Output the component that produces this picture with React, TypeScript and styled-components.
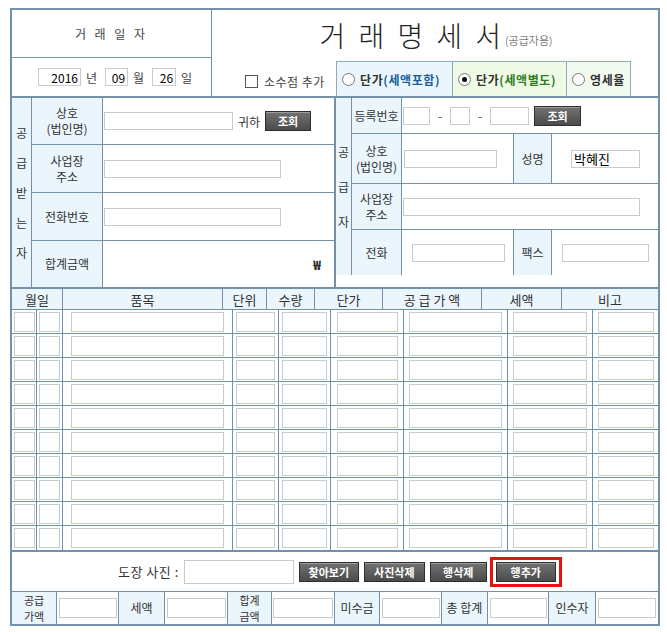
import React from 'react';
import styled, { createGlobalStyle } from 'styled-components';

const line = '#7391aa';
const pale = '#eaf5fc';
const font = '"Noto Sans CJK KR", "Noto Sans", sans-serif';

const GlobalStyle = createGlobalStyle`
  html, body { margin: 0; padding: 0; background: #fff; }
  body { font-family: ${font}; font-size: 12px; color: #333; }
  * { box-sizing: border-box; }
`;

const Page = styled.div`
  padding: 8px 0 0 10px;
`;

const Sheet = styled.div`
  width: 650px;
  border: 2px solid ${line};
`;

const Field = styled.input<{ $w: number; $h?: number; $align?: string }>`
  width: ${p => p.$w}px;
  height: ${p => p.$h ?? 20}px;
  border: 1px solid #cbcbcb;
  background: #fff;
  padding: 0 2px;
  margin: 0;
  font-family: ${font};
  font-size: 12px;
  line-height: 1;
  text-align: ${p => p.$align ?? 'left'};
  color: #000;
  outline: none;
`;

const DarkButton = styled.button<{ $w: number }>`
  width: ${p => p.$w}px;
  height: 20px;
  padding: 0;
  border: 1px solid #2e2e2e;
  background: linear-gradient(#727272, #4b4b4b);
  box-shadow: inset 0 1px 0 rgba(255, 255, 255, 0.3);
  color: #fff;
  font-family: ${font};
  font-size: 11px;
  font-weight: 700;
  line-height: 18px;
  cursor: pointer;
`;

/* ---------- head ---------- */

const Head = styled.div`
  display: flex;
  height: 88px;
  border-bottom: 2px solid ${line};
`;

const DateBlock = styled.div`
  width: 200px;
  border-right: 1px solid ${line};
  display: flex;
  flex-direction: column;
`;

const DateTitle = styled.div`
  height: 48px;
  border-bottom: 1px solid ${line};
  display: flex;
  align-items: center;
  justify-content: center;
  letter-spacing: 3px;
  color: #444;
`;

const DateRow = styled.div`
  flex: 1;
  display: flex;
  align-items: center;
  padding-left: 26px;
  gap: 5px;
  color: #444;
`;

const Unit = styled.span`
  margin-right: 3px;
`;

const TitleBlock = styled.div`
  flex: 1;
  display: flex;
  flex-direction: column;
`;

const Title = styled.div`
  height: 50px;
  display: flex;
  align-items: center;
  justify-content: center;
  padding-left: 2px;
  font-size: 28px;
  font-weight: 300;
  letter-spacing: 2px;
  word-spacing: 3px;
  color: #222;
`;

const Sub = styled.span`
  font-size: 11px;
  letter-spacing: 0;
  word-spacing: 0;
  margin: 10px 0 0 2px;
  color: #444;
`;

const OptionRow = styled.div`
  flex: 1;
  display: flex;
  align-items: stretch;
`;

const CheckLabel = styled.label`
  display: flex;
  align-items: center;
  gap: 6px;
  padding: 6px 0 0 33px;
  width: 124px;
  color: #444;
  letter-spacing: 0.5px;
  white-space: nowrap;
`;

const Box = styled.span`
  width: 13px;
  height: 13px;
  border: 1px solid #555;
  background: #fff;
`;

const RadioGroup = styled.div`
  display: flex;
  margin-top: 1px;
`;

const RadioCell = styled.label<{ $bg: string; $w: number }>`
  width: ${p => p.$w}px;
  background: ${p => p.$bg};
  border: 1px solid #8eaabf;
  border-bottom: none;
  margin-left: -1px;
  display: flex;
  align-items: center;
  gap: 5px;
  padding-left: 5px;
  font-weight: 700;
  color: #333;
  letter-spacing: 0.6px;
  white-space: nowrap;
  &:first-child { margin-left: 0; }
`;

const Dot = styled.span<{ $on?: boolean }>`
  width: 13px;
  height: 13px;
  border-radius: 50%;
  border: 1px solid #777;
  background: #fff;
  display: flex;
  align-items: center;
  justify-content: center;
  flex: none;
  &::after {
    content: '';
    width: 5px;
    height: 5px;
    border-radius: 50%;
    background: ${p => (p.$on ? '#111' : 'transparent')};
  }
`;

const Tint = styled.span<{ $c: string }>`
  color: ${p => p.$c};
`;

/* ---------- parties ---------- */

const Parties = styled.div`
  display: flex;
  height: 191px;
  border-bottom: 2px solid ${line};
`;

const Receiver = styled.div`
  width: 324px;
  display: grid;
  grid-template-columns: 20px 71px 1fr;
  grid-template-rows: 47px 48px 48px 1fr;
  border-right: 2px solid ${line};
`;

const Supplier = styled.div`
  flex: 1;
  display: grid;
  grid-template-columns: 16px 50px 112px 38px 1fr;
  grid-template-rows: 36px 50px 46px 45px 1fr;
`;

const Side = styled.div<{ $lh: number; $rows: string }>`
  grid-row: ${p => p.$rows};
  grid-column: 1;
  background: ${pale};
  border-right: 1px solid ${line};
  display: flex;
  flex-direction: column;
  align-items: center;
  justify-content: center;
  line-height: ${p => p.$lh}px;
  color: #333;
`;

const Label = styled.div<{ $last?: boolean }>`
  background: ${pale};
  border-right: 1px solid ${line};
  border-bottom: ${p => (p.$last ? 'none' : `1px solid ${line}`)};
  display: flex;
  align-items: center;
  justify-content: center;
  text-align: center;
  line-height: 16px;
  color: #333;
  white-space: nowrap;
`;

const Cell = styled.div<{ $last?: boolean; $span?: string; $pad?: number; $right?: boolean }>`
  grid-column: ${p => p.$span ?? 'auto'};
  border-bottom: ${p => (p.$last ? 'none' : `1px solid ${line}`)};
  border-right: ${p => (p.$right ? `1px solid ${line}` : 'none')};
  display: flex;
  align-items: center;
  gap: 5px;
  padding-left: ${p => p.$pad ?? 1}px;
  color: #333;
`;

const Won = styled.span`
  margin-left: auto;
  margin-right: 13px;
  font-weight: 700;
  font-size: 13px;
  color: #222;
`;

const Dash = styled.span`
  width: 10px;
  text-align: center;
  color: #444;
`;

const Filler = styled.div`
  grid-column: 1 / -1;
`;

/* ---------- items ---------- */

const headCols = [51, 160, 44, 48, 68, 99, 80, 96];
const bodyCols = [25, 26, 170, 46, 52, 73, 104, 85, 65];
const bodyInputs = [21, 21, 153, 39, 45, 61, 93, 74, 56];
const headNames = ['월일', '품목', '단위', '수량', '단가', '공 급 가 액', '세액', '비고'];

const ItemHead = styled.div`
  display: grid;
  grid-template-columns: ${headCols.map(c => `${c}px`).join(' ')};
  height: 21px;
  background: ${pale};
  border-bottom: 1px solid ${line};
`;

const HeadCell = styled.div`
  border-right: 1px solid ${line};
  display: flex;
  align-items: center;
  justify-content: center;
  font-size: 13px;
  color: #333;
  &:last-child { border-right: none; }
`;

const ItemBody = styled.div`
  border-bottom: 2px solid ${line};
`;

const ItemRow = styled.div`
  display: grid;
  grid-template-columns: ${bodyCols.map(c => `${c}px`).join(' ')};
  height: 24px;
  border-bottom: 1px solid ${line};
  &:last-child { border-bottom: none; }
`;

const RowCell = styled.div`
  border-right: 1px solid ${line};
  display: flex;
  align-items: center;
  justify-content: center;
  &:last-child { border-right: none; }
`;

/* ---------- footer ---------- */

const StampRow = styled.div`
  height: 40px;
  border-bottom: 1px solid ${line};
  display: flex;
  align-items: center;
  padding-left: 106px;
  gap: 5px;
  color: #333;
  font-size: 13px;
`;

const StampText = styled.span`
  letter-spacing: 0.5px;
`;

const Highlight = styled.div`
  border: 3px solid #e8120c;
  padding: 2px 3px;
  margin-left: -2px;
  display: flex;
`;

const TotalRow = styled.div`
  display: grid;
  grid-template-columns: 45px 62px 46px 63px 44px 63px 45px 62px 46px 61px 47px 62px;
  height: 32px;
`;

const TotalLabel = styled.div<{ $two?: boolean }>`
  background: ${pale};
  border-right: 1px solid ${line};
  display: flex;
  align-items: center;
  justify-content: center;
  text-align: center;
  line-height: ${p => (p.$two ? '16px' : '18px')};
  font-size: ${p => (p.$two ? '11px' : '12px')};
  color: #333;
  white-space: nowrap;
`;

const TotalCell = styled.div`
  border-right: 1px solid ${line};
  display: flex;
  align-items: center;
  justify-content: center;
  &:last-child { border-right: none; }
`;

const totals: [string[], number][] = [
  [['공급', '가액'], 58],
  [['세액'], 59],
  [['합계', '금액'], 60],
  [['미수금'], 58],
  [['총 합계'], 57],
  [['인수자'], 58]
];

const App: React.FC = () => {
  return (
    <>
      <GlobalStyle />
      <Page>
        <Sheet>
          <Head>
            <DateBlock>
              <DateTitle>거 래 일 자</DateTitle>
              <DateRow>
                <Field $w={43} $h={18} $align='right' defaultValue='2016' readOnly />
                <Unit>년</Unit>
                <Field $w={23} $h={18} $align='right' defaultValue='09' readOnly />
                <Unit>월</Unit>
                <Field $w={24} $h={18} $align='right' defaultValue='26' readOnly />
                <Unit>일</Unit>
              </DateRow>
            </DateBlock>
            <TitleBlock>
              <Title>
                거 래 명 세 서<Sub>(공급자용)</Sub>
              </Title>
              <OptionRow>
                <CheckLabel>
                  <Box />
                  소수점 추가
                </CheckLabel>
                <RadioGroup>
                  <RadioCell $bg={pale} $w={117}>
                    <Dot />
                    <span>단가<Tint $c='#1b5e9c'>(세액포함)</Tint></span>
                  </RadioCell>
                  <RadioCell $bg='#effae6' $w={115}>
                    <Dot $on />
                    <span>단가<Tint $c='#2f7d1e'>(세액별도)</Tint></span>
                  </RadioCell>
                  <RadioCell $bg='#f2f9ee' $w={65}>
                    <Dot />
                    <span>영세율</span>
                  </RadioCell>
                </RadioGroup>
              </OptionRow>
            </TitleBlock>
          </Head>

          <Parties>
            <Receiver>
              <Side $lh={30} $rows='1 / -1'>
                <span>공</span>
                <span>급</span>
                <span>받</span>
                <span>는</span>
                <span>자</span>
              </Side>
              <Label>상호<br />(법인명)</Label>
              <Cell>
                <Field $w={129} $h={18} />
                <span>귀하</span>
                <DarkButton $w={46}>조회</DarkButton>
              </Cell>
              <Label>사업장<br />주소</Label>
              <Cell>
                <Field $w={177} $h={18} />
              </Cell>
              <Label>전화번호</Label>
              <Cell>
                <Field $w={177} $h={18} />
              </Cell>
              <Label $last>합계금액</Label>
              <Cell $last>
                <Won>₩</Won>
              </Cell>
            </Receiver>

            <Supplier>
              <Side $lh={35} $rows='1 / 5'>
                <span>공</span>
                <span>급</span>
                <span>자</span>
              </Side>
              <Label>등록번호</Label>
              <Cell $span='3 / 6' $pad={1}>
                <Field $w={27} $h={18} />
                <Dash>-</Dash>
                <Field $w={20} $h={18} />
                <Dash>-</Dash>
                <Field $w={39} $h={18} />
                <DarkButton $w={47}>조회</DarkButton>
              </Cell>
              <Label>상호<br />(법인명)</Label>
              <Cell $right $pad={2}>
                <Field $w={93} $h={18} />
              </Cell>
              <Label>성명</Label>
              <Cell $pad={19}>
                <Field $w={69} $h={18} defaultValue='박혜진' readOnly style={{ fontSize: 13 }} />
              </Cell>
              <Label>사업장<br />주소</Label>
              <Cell $span='3 / 6' $pad={1}>
                <Field $w={237} $h={18} />
              </Cell>
              <Label $last>전화</Label>
              <Cell $last $right $pad={10}>
                <Field $w={93} $h={18} />
              </Cell>
              <Label $last>팩스</Label>
              <Cell $last $pad={10}>
                <Field $w={87} $h={18} />
              </Cell>
              <Filler />
            </Supplier>
          </Parties>

          <ItemHead>
            {headNames.map(n => (
              <HeadCell key={n}>{n}</HeadCell>
            ))}
          </ItemHead>
          <ItemBody>
            {Array.from({ length: 10 }).map((_, r) => (
              <ItemRow key={r}>
                {bodyInputs.map((w, c) => (
                  <RowCell key={c}>
                    <Field $w={w} $h={20} />
                  </RowCell>
                ))}
              </ItemRow>
            ))}
          </ItemBody>

          <StampRow>
            <StampText>도장 사진 :</StampText>
            <Field $w={110} $h={24} />
            <DarkButton $w={60}>찾아보기</DarkButton>
            <DarkButton $w={61}>사진삭제</DarkButton>
            <DarkButton $w={57}>행삭제</DarkButton>
            <Highlight>
              <DarkButton $w={60}>행추가</DarkButton>
            </Highlight>
          </StampRow>

          <TotalRow>
            {totals.map(([label, w], i) => (
              <React.Fragment key={i}>
                <TotalLabel $two={label.length > 1}>
                  {label.map((t, j) => (
                    <React.Fragment key={j}>
                      {j > 0 && <br />}
                      {t}
                    </React.Fragment>
                  ))}
                </TotalLabel>
                <TotalCell>
                  <Field $w={w} $h={20} />
                </TotalCell>
              </React.Fragment>
            ))}
          </TotalRow>
        </Sheet>
      </Page>
    </>
  );
};

export default App;
